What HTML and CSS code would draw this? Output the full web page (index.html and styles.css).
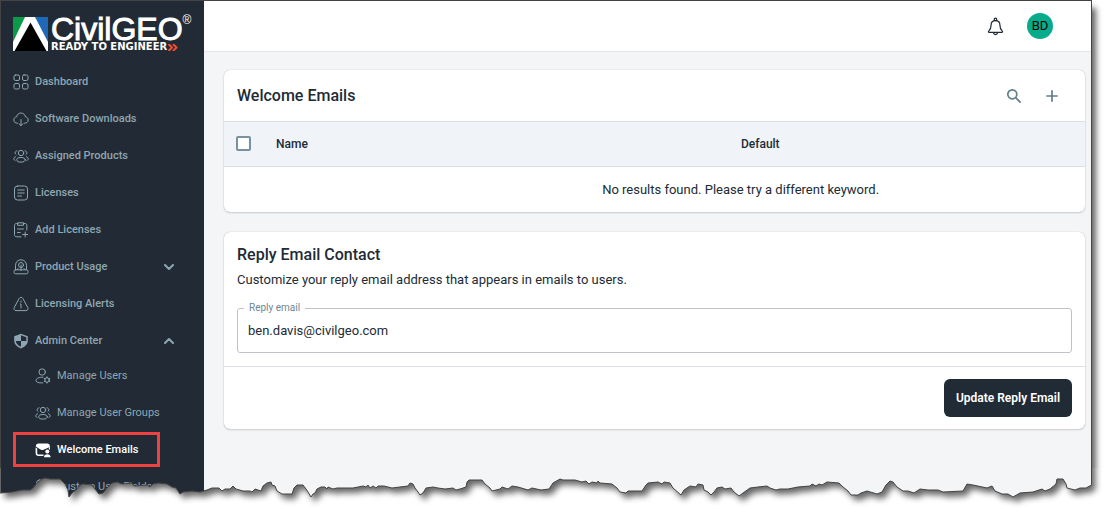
FILE: index.html
```html
<!DOCTYPE html>
<html lang="en">
<head>
    <meta charset="UTF-8">
    <meta name="viewport" content="width=device-width, initial-scale=1.0">
    <title>Welcome Emails - CivilGEO</title>
    <link rel="stylesheet" href="styles.css">
</head>
<body>
    <div class="window">
        <aside class="sidebar">
            <a class="logo" href="#">
                <svg class="logo-mark" viewBox="0 0 35 34">
                    <path fill="#fff" d="M0 0h35v34H0z"/>
                    <path fill="#0b9a4a" d="M0 0h12L0 25z"/>
                    <path fill="#1f69b8" d="M22 0h13v25z"/>
                    <path fill="#000" d="M17.500 5.500L33.500 34h-32z"/>
                </svg>
                <span class="logo-text">
                    <span class="logo-name">CivilGEO<sup>&reg;</sup></span>
                    <span class="logo-tagline">READY TO ENGINEER<svg class="logo-arrows" viewBox="0 0 10 7"><path d="M1 .5l3 3-3 3M5.500 .5l3 3-3 3"/></svg></span>
                </span>
            </a>

            <nav class="nav">
                <a class="nav-item" href="#">
                    <svg class="icon" viewBox="0 0 16 16"><rect x="1" y="1" width="5.500" height="5.500" rx="1.500"/><rect x="9.500" y="1" width="5.500" height="5.500" rx="1.500"/><rect x="1" y="9.500" width="5.500" height="5.500" rx="1.500"/><rect x="9.500" y="9.500" width="5.500" height="5.500" rx="1.500"/></svg>
                    Dashboard
                </a>
                <a class="nav-item" href="#">
                    <svg class="icon" viewBox="0 0 16 16"><path d="M4.500 12.300C2.300 12.300.8 10.900.8 9s1.300-3 2.800-3.200C4 3.500 5.800 2 8 2s4 1.500 4.400 3.800C14 6 15.200 7.200 15.200 9s-1.500 3.300-3.700 3.300M8 8.500v6M6 12.700l2 2 2-2"/></svg>
                    Software Downloads
                </a>
                <a class="nav-item" href="#">
                    <svg class="icon" viewBox="0 0 16 16"><circle cx="8" cy="5" r="2.700"/><ellipse cx="8" cy="11.800" rx="4.300" ry="2.300"/><path d="M4 2.800C2.700 3 2 4 2.200 5.200c.1.600.4 1 .9 1.400M2.500 8.800C1.300 9.200.7 10 .8 11c.1.700.6 1.200 1.300 1.500M12 2.800c1.300.2 2 1.200 1.800 2.400-.1.600-.4 1-.9 1.400M13.500 8.800c1.200.4 1.800 1.200 1.700 2.200-.1.700-.6 1.200-1.300 1.500"/></svg>
                    Assigned Products
                </a>
                <a class="nav-item" href="#">
                    <svg class="icon" viewBox="0 0 16 16"><rect x="1.500" y="1" width="13" height="14" rx="3"/><path d="M4.800 5h6.400M4.800 8h6.400M4.800 11h3.700"/></svg>
                    Licenses
                </a>
                <a class="nav-item" href="#">
                    <svg class="icon" viewBox="0 0 16 16"><path d="M5 1.500H3.500c-1.300 0-2 .8-2 2v9c0 1.500.8 2.300 2.200 2.300H8M10.500 1.500H12c1.200 0 1.800.7 1.800 2V8M5 .8h5.500v2.500H5zM4.500 7h6M4.500 10.500h2.700M12.200 10v5M9.700 12.500h5"/></svg>
                    Add Licenses
                </a>
                <a class="nav-item" href="#">
                    <svg class="icon" viewBox="0 0 16 16"><path d="M2.500 10.500V6.300C2.500 3.200 4.800.8 8 .8s5.500 2.400 5.500 5.500v4.200"/><rect x="1" y="10.800" width="14" height="4" rx="1.500"/><circle cx="8" cy="6" r="2.500"/><path d="M8 6v5.500M5 9.500l-1 1.300M11 9.500l1 1.300"/></svg>
                    Product Usage
                    <svg class="chevron" viewBox="0 0 10 6"><path d="M1 1l4 4 4-4"/></svg>
                </a>
                <a class="nav-item" href="#">
                    <svg class="icon" viewBox="0 0 16 16"><path d="M6.200 2.400c.8-1.500 2.800-1.500 3.600 0l5 9.200c.7 1.500-.2 3-1.800 3H3c-1.600 0-2.500-1.500-1.800-3zM7.500 8H8v4M8 5v1.200"/></svg>
                    Licensing Alerts
                </a>
                <a class="nav-item" href="#">
                    <svg class="icon" viewBox="0 0 16 16"><path class="solid" fill-rule="evenodd" d="M8 .8l6.800 2.500v4.400c0 3.500-2.800 6.200-6.800 7.700-4-1.500-6.800-4.200-6.800-7.700V3.300zM8 2.200V8h5.300V4.300zM8 8H2.700c.3 2.500 2.300 4.500 5.300 5.800z"/></svg>
                    Admin Center
                    <svg class="chevron" viewBox="0 0 10 6"><path d="M1 5l4-4 4 4"/></svg>
                </a>

                <div class="subnav">
                    <a class="nav-item" href="#">
                        <svg class="icon" viewBox="0 0 16 16"><circle cx="7.200" cy="4" r="3.200"/><path d="M8 9.200C4.300 9 1 10.300 1 12.500c0 1.600 2 2.400 5.500 2.400h1.200"/><circle cx="12" cy="12" r="2.300"/><path d="M12 8.800v1M12 14.200v1M9.200 10.400l.9.500M13.900 13.100l.9.500M14.800 10.400l-.9.500M10.100 13.100l-.9.500"/></svg>
                        Manage Users
                    </a>
                    <a class="nav-item" href="#">
                        <svg class="icon" viewBox="0 0 16 16"><circle cx="8" cy="5" r="2.700"/><ellipse cx="8" cy="11.800" rx="4.300" ry="2.300"/><path d="M4 2.800C2.700 3 2 4 2.200 5.200c.1.600.4 1 .9 1.400M2.500 8.800C1.300 9.200.7 10 .8 11c.1.700.6 1.200 1.300 1.500M12 2.800c1.300.2 2 1.200 1.800 2.400-.1.600-.4 1-.9 1.400M13.500 8.800c1.200.4 1.800 1.200 1.700 2.200-.1.700-.6 1.200-1.300 1.500"/></svg>
                        Manage User Groups
                    </a>
                    <a class="nav-item active" href="#">
                        <svg class="icon" viewBox="0 0 16 16"><path class="solid" d="M3.500 1.500h8.800c1.500 0 2.500 1 2.500 2.500v1L8.500 7.800C7.500 8.200 6.500 8 5.500 7.400L.8 4.500C.8 2.700 1.800 1.500 3.500 1.500z"/><path class="solid" d="M.6 5.500L2.200 6.500v4.700c0 .7.400 1.200 1.200 1.200H8.500V14H3.600c-1.800 0-3-1.200-3-3z"/><circle class="solid" cx="12.300" cy="9.600" r="2"/><path class="solid" d="M9 15.300c0-2 1.300-3 3.300-3s3.300 1 3.300 3zM13.800 5.500l1.200-.6v3l-1.200-1z"/></svg>
                        Welcome Emails
                    </a>
                    <a class="nav-item" href="#">
                        <svg class="icon" viewBox="0 0 16 16"><rect x="1.500" y="1" width="13" height="14" rx="3"/><path d="M4.800 5h6.400M4.800 8h6.400M4.800 11h3.700"/></svg>
                        Custom User Fields
                    </a>
                </div>
            </nav>
        </aside>

        <div class="page">
            <header class="topbar">
                <button class="icon-button" type="button" aria-label="Notifications">
                    <svg class="bell" viewBox="0 0 18 20"><circle cx="9" cy="2.500" r="1.300"/><path d="M9 3.800c-3 0-4.700 2.200-4.700 5 0 3-.8 4.500-2.300 5.800-.7.700-.6 1.700.4 1.700h13.200c1 0 1.100-1 .4-1.700-1.500-1.300-2.300-2.800-2.300-5.800 0-2.800-1.700-5-4.700-5zM6.700 16.500c.3 1.300 1.200 2 2.300 2s2-.7 2.300-2"/></svg>
                </button>
                <button class="avatar" type="button">BD</button>
            </header>

            <main class="content">
                <section class="card">
                    <div class="card-header">
                        <h2>Welcome Emails</h2>
                        <div class="card-actions">
                            <button class="icon-button" type="button" aria-label="Search">
                                <svg class="action" viewBox="0 0 16 16"><circle cx="6.300" cy="6.300" r="4.500"/><path d="M9.700 9.700l4.900 4.900"/></svg>
                            </button>
                            <button class="icon-button" type="button" aria-label="Add">
                                <svg class="action" viewBox="0 0 16 16"><path d="M8 2.300v11.400M2.300 8h11.400"/></svg>
                            </button>
                        </div>
                    </div>
                    <div class="table-wrap">
                        <table>
                            <thead>
                                <tr>
                                    <th class="col-check"><input type="checkbox" aria-label="Select all"></th>
                                    <th class="col-name">Name</th>
                                    <th>Default</th>
                                </tr>
                            </thead>
                            <tbody>
                                <tr>
                                    <td colspan="3" class="empty">No results found. Please try a different keyword.</td>
                                </tr>
                            </tbody>
                        </table>
                    </div>
                </section>

                <section class="card">
                    <div class="card-body">
                        <h2>Reply Email Contact</h2>
                        <p>Customize your reply email address that appears in emails to users.</p>
                        <div class="field">
                            <label for="replyEmail">Reply email</label>
                            <input type="email" id="replyEmail" value="ben.davis@civilgeo.com">
                        </div>
                    </div>
                    <div class="card-footer">
                        <button class="btn" type="button">Update Reply Email</button>
                    </div>
                </section>
            </main>
        </div>
    </div>

    <div class="highlight"></div>

    <!-- torn paper edge along the bottom -->
    <svg class="torn-edge" viewBox="0 468 1107 40" preserveAspectRatio="none" aria-hidden="true">
        <defs>
            <path id="sheet" d="M0.500 493L12 492 17 491 22 490 30 490 33 488 37 483 42 479 45 478 50 479 60 479 65 484 68 490 69 497 72 493 77 489 79 486 83 484 92 485 95 489 99 494 103 493 107 488 112 483 117 482 122 484 132 483 134 486 147 485 150 487 153 484 158 483 167 484 172 487 176 488 180 494 183 492 192 491 200 492 207 490 212 488 219 488 222 491 225 489 230 489 233 486 236 489 243 491 250 491 252 492 255 489 261 491 263 486 267 483 271 482 272 485 275 486 277 491 282 494 292 494 294 488 297 485 303 485 306 489 308 492 311 497 313 494 315 493 317 489 321 487 325 487 327 489 328 487 333 489 337 488 353 488 363 486 366 487 368 485 370 488 373 486 376 488 378 486 384 486 392 488 400 487 408 486 410 483 413 484 415 488 418 492 420 495 423 493 426 488 433 487 438 488 445 489 453 488 456 490 460 489 466 487 467 482 469 480 482 480 485 484 490 488 492 491 500 489 502 487 508 489 512 486 518 487 528 490 532 488 541 490 549 489 553 483 560 479 563 480 575 480 582 482 586 481 589 484 592 482 597 483 598 481 600 483 612 484 617 488 620 492 626 493 628 491 642 491 646 485 648 483 658 482 662 484 664 482 670 483 673 488 681 495 684 490 690 486 696 487 698 484 703 485 704 490 708 492 711 495 714 492 717 488 722 487 725 489 731 488 734 492 739 496 743 493 750 488 758 487 767 486 770 488 776 490 780 489 788 489 798 487 810 486 812 484 816 486 819 484 822 485 827 482 839 483 843 487 848 491 851 495 858 495 861 493 867 491 877 494 882 492 886 485 890 481 893 482 897 487 903 491 908 491 914 493 920 489 928 490 938 490 943 492 963 491 967 484 973 485 987 488 992 486 995 491 1002 494 1008 494 1013 497 1020 493 1033 492 1042 489 1045 491 1050 489 1056 484 1057 479 1063 479 1066 484 1067 488 1075 490 1080 488 1086 488 1091.500 485V440H0.500z"/>
            <mask id="below" maskUnits="userSpaceOnUse" x="0" y="440" width="1107" height="68">
                <path fill="#fff" d="M0 440h1107v68H0z"/>
                <use href="#sheet" fill="#000"/>
            </mask>
            <filter id="blur" filterUnits="userSpaceOnUse" x="-20" y="420" width="1147" height="110">
                <feGaussianBlur stdDeviation="3"/>
            </filter>
        </defs>
        <g mask="url(#below)">
            <path fill="#fff" d="M0 468h1107v40H0z"/>
            <g filter="url(#blur)">
                <use class="edge-shadow" href="#sheet" x="4" y="5"/>
            </g>
        </g>
        <use class="edge-line" href="#sheet"/>
    </svg>
</body>
</html>
```
FILE: styles.css
```css
* {
    box-sizing: border-box;
}
body {
    margin: 0;
    height: 100vh;
    overflow: hidden;
    position: relative;
    background-color: #fff;
    font-family: Roboto, sans-serif;
    font-size: 13px;
    color: #212b36;
}
h2, p {
    margin: 0;
}
h2 {
    font-size: 16px;
    font-weight: 500;
    line-height: 24px;
}
a {
    color: inherit;
    text-decoration: none;
}
button {
    font-family: inherit;
    cursor: pointer;
}
svg {
    fill: none;
    stroke-linecap: round;
    stroke-linejoin: round;
    flex-shrink: 0;
}
.window {
    display: flex;
    height: 100vh;
    margin-right: 15px;
    border: 1px solid #444;
    border-bottom: 0;
    box-shadow: 4px 8px 6px rgba(0, 0, 0, 0.6);
}

/* Sidebar */
.sidebar {
    width: 203px;
    flex-shrink: 0;
    background-color: #222b35;
    color: #8ea6b1;
    overflow: hidden;
}
.logo {
    display: flex;
    gap: 3px;
    padding: 16px 0 0 12px;
    height: 62px;
    color: #fff;
}
.logo-mark {
    width: 35px;
    height: 34px;
}
.logo-text {
    display: flex;
    flex-direction: column;
    gap: 2px;
    white-space: nowrap;
}
.logo-name {
    display: flex;
    font-family: "Liberation Sans", Arial, sans-serif;
    font-size: 32px;
    line-height: 24px;
    -webkit-text-stroke: 1px #fff;
}
.logo-name sup {
    font-size: 12px;
    line-height: 6px;
    -webkit-text-stroke: 0;
}
.logo-tagline {
    display: flex;
    align-items: center;
    gap: 1px;
    font-family: "DejaVu Sans", sans-serif;
    font-size: 10px;
    font-weight: bold;
    line-height: 8px;
}
.logo-arrows {
    width: 10px;
    height: 7px;
    stroke: #f04e30;
    stroke-width: 2;
}
.nav-item {
    display: flex;
    align-items: center;
    gap: 6px;
    height: 37px;
    padding: 0 30px 0 12px;
    font-size: 11px;
    font-weight: 500;
    white-space: nowrap;
}
.subnav {
    margin-top: -2px;
}
.subnav .nav-item {
    padding-left: 34px;
    font-weight: 400;
}
.subnav .nav-item.active {
    color: #fff;
    font-weight: 500;
}
.icon {
    width: 16px;
    height: 16px;
    stroke: currentColor;
    stroke-width: 1;
}
.icon .solid {
    fill: currentColor;
    stroke: none;
}
.chevron {
    width: 10px;
    height: 6px;
    margin-left: auto;
    stroke: currentColor;
    stroke-width: 2;
}

/* Page */
.page {
    flex: 1;
    min-width: 0;
    background-color: #f4f5f7;
}
.topbar {
    display: flex;
    align-items: center;
    justify-content: flex-end;
    gap: 20px;
    height: 51px;
    padding-right: 38px;
    background-color: #fff;
    border-bottom: 1px solid #e4e6ea;
}
.icon-button {
    display: flex;
    padding: 3px;
    border: 0;
    background: none;
}
.bell {
    width: 17px;
    height: 19px;
    stroke: #212b36;
    stroke-width: 1.3;
}
.avatar {
    width: 26px;
    height: 26px;
    padding: 0;
    border: 0;
    border-radius: 50%;
    background-color: #06ab8c;
    color: #000;
    font-size: 13px;
    line-height: 24px;
}
.content {
    display: flex;
    flex-direction: column;
    gap: 20px;
    padding: 18px 6px 0 20px;
}
.card {
    background-color: #fff;
    border-radius: 6px;
    box-shadow: 0 0 1px rgba(0, 0, 0, 0.3), 0 1px 2px rgba(0, 0, 0, 0.15);
    overflow: hidden;
}
.card-header {
    display: flex;
    align-items: center;
    justify-content: space-between;
    height: 52px;
    padding: 0 22px 0 13px;
    border-bottom: 1px solid #dcdfe3;
}
.card-actions {
    display: flex;
    gap: 16px;
}
.action {
    width: 16px;
    height: 16px;
    stroke: #607d8b;
    stroke-width: 1.7;
    stroke-linecap: butt;
}
.table-wrap {
    overflow: hidden;
}
table {
    width: 120%;
    table-layout: fixed;
    border-collapse: collapse;
}
th, td {
    height: 46px;
    padding: 0 12px;
}
th {
    height: 44px;
    background-color: #f0f3f8;
    border-bottom: 1px solid #dcdfe3;
    font-size: 12px;
    font-weight: 500;
    text-align: left;
}
.col-check {
    width: 40px;
}
.col-name {
    width: 45%;
}
.empty {
    text-align: center;
}
input[type="checkbox"] {
    appearance: none;
    display: block;
    width: 15px;
    height: 15px;
    margin: 0;
    border: 2px solid #7890a0;
    border-radius: 2px;
    background-color: #fff;
}
.card-body {
    padding: 11px 13px 13px;
}
.card-body p {
    margin-top: 3px;
    line-height: 20px;
}
.field {
    position: relative;
    margin-top: 18px;
}
.field label {
    position: absolute;
    top: -7px;
    left: 7px;
    padding: 0 5px;
    background-color: #fff;
    color: #6f8793;
    font-size: 10px;
    line-height: 14px;
}
.field input {
    display: block;
    width: 100%;
    height: 45px;
    padding: 0 10px;
    border: 1px solid #c0c3c5;
    border-radius: 3px;
    font-family: inherit;
    font-size: 13px;
    color: #212b36;
}
.card-footer {
    display: flex;
    justify-content: flex-end;
    padding: 12px 13px;
    border-top: 1px solid #dcdfe3;
}
.btn {
    height: 38px;
    padding: 0 12px;
    border: 0;
    border-radius: 6px;
    background-color: #212b36;
    color: #fff;
    font-size: 12px;
    font-weight: 600;
}

/* Callout box around the active menu item */
.highlight {
    position: absolute;
    top: 432px;
    left: 13px;
    width: 147px;
    height: 35px;
    border: 3px solid #f04040;
}

/* Torn bottom edge */
.torn-edge {
    position: absolute;
    left: 0;
    bottom: 0;
    width: 100%;
    height: 40px;
}
.edge-line {
    stroke: #444;
    stroke-width: 1;
}
.edge-shadow {
    fill: rgba(0, 0, 0, 0.6);
}
```
